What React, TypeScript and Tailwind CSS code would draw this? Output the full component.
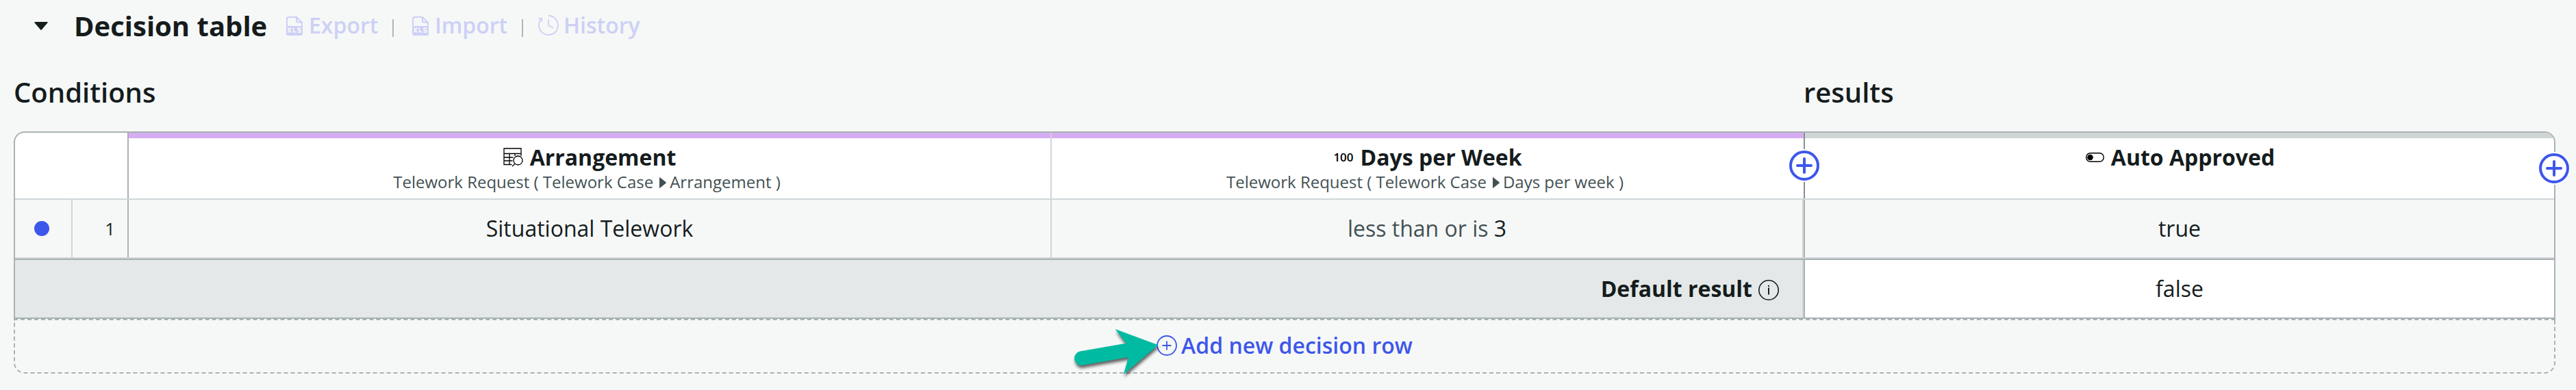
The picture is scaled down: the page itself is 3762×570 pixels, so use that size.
import React from "react";

const ExcelIcon = () => (
  <svg width="24" height="28" viewBox="0 0 24 28" className="block shrink-0" fill="none">
    <path d="M1 15V4a3 3 0 0 1 3-3h11l8 8v6" stroke="currentColor" strokeWidth="2" />
    <path d="M15 1v5.500a2 2 0 0 0 2 2h6" stroke="currentColor" strokeWidth="2" />
    <path d="M0 14h24v11a3 3 0 0 1-3 3H3a3 3 0 0 1-3-3z" fill="currentColor" />
    <path d="M2.500 16.500l4.500 7M7 16.500l-4.500 7M10.500 16.500v6.200h4.200M21.500 17.200h-4.200v2.800h3.600v2.800h-4.200" stroke="#f6f8f7" strokeWidth="1.700" />
  </svg>
);

const HistoryIcon = () => (
  <svg width="30" height="30" viewBox="0 0 30 30" className="mb-[2px] block shrink-0" fill="none" stroke="currentColor" strokeWidth="1.800">
    <path d="M15 1A14 14 0 1 1 4.800 5.400" />
    <path d="M0 4.800h5.200v4.700M15 6.500v8.500l7 4" />
  </svg>
);

const TableSearchIcon = () => (
  <svg width="30" height="28" viewBox="0 0 30 28" className="block shrink-0" fill="none" stroke="#000" strokeWidth="1.300">
    <path d="M12.500 24.500H1V1h25v7.500H1M9 8.500v16M1 14h13.500M1 19h12.500M17 8.500v3.500M26 8.500v3.500" />
    <circle cx="21.500" cy="18.500" r="6.500" />
    <path d="M17 23.200l-4 4" />
  </svg>
);

const ToggleIcon = () => (
  <svg width="27" height="14" viewBox="0 0 27 14" className="block shrink-0" fill="none">
    <rect x=".7" y=".7" width="25.600" height="12.600" rx="6.300" stroke="#000" strokeWidth="1.400" />
    <circle cx="6.500" cy="7" r="4.300" fill="#000" />
  </svg>
);

const PlusCircle = () => (
  <svg width="48" height="48" viewBox="0 0 48 48" className="block" fill="none">
    <circle cx="24" cy="24" r="24" fill="#fff" />
    <circle cx="24" cy="24" r="20" stroke="#3d57eb" strokeWidth="4" />
    <path d="M24 14v20M14 24h20" stroke="#3d57eb" strokeWidth="4" strokeLinecap="round" />
  </svg>
);

const FieldPath = ({ leaf }: { leaf: string }) => (
  <div className="mr-[8px] flex items-center text-[24px] leading-[32px] text-[#435153]">
    <span>Telework Request ( Telework Case</span>
    <svg width="10" height="16" viewBox="0 0 10 16" className="mt-[2px] mr-[5px] ml-[9px]">
      <path d="M0 0.500Q0-.5 1 .4L9.500 7.200Q10.200 8 9.500 8.800L1 15.600Q0 16.500 0 15.500z" fill="#435153" />
    </svg>
    <span>{leaf} )</span>
  </div>
);

export default function App() {
  return (
    <div className="h-[570px] w-[3762px] overflow-hidden bg-[#f6f8f7] pl-[20px] font-['Open_Sans','Noto_Sans',sans-serif] text-[#151c1d]">
      <div className="flex h-[76px] items-center pl-[30px]">
        <svg width="20" height="12" viewBox="0 0 20 12" className="block">
          <path d="M1.500 0h17q2 0 .8 1.500L11 11.200q-1 1-2 0L.7 1.500Q-.5 0 1.500 0z" fill="#151c1d" />
        </svg>
        <h1 className="ml-[38px] w-[282px] text-[40px] leading-[76px] font-bold whitespace-nowrap">Decision table</h1>
        <div className="ml-[28px] flex items-center text-[32px] font-semibold text-[#cdd0f5]">
          <ExcelIcon />
          <span className="ml-[9px] w-[101px] pb-[2px] leading-[74px]">Export</span>
          <i className="mt-[6px] ml-[21px] h-[26px] w-[2px] bg-[#b0b7b8]" />
          <span className="ml-[27px]"><ExcelIcon /></span>
          <span className="ml-[9px] w-[105px] pb-[2px] leading-[74px]">Import</span>
          <i className="mt-[6px] ml-[22px] h-[26px] w-[2px] bg-[#b0b7b8]" />
          <span className="ml-[22px]"><HistoryIcon /></span>
          <span className="ml-[7px] pb-[2px] leading-[74px]">History</span>
        </div>
      </div>
      <div className="flex h-[116px] items-center pt-[2px] text-[40px] leading-[114px] font-semibold">
        <span className="w-[2614px]">Conditions</span>
        <span>results</span>
      </div>
      <div className="relative w-[3712px]">
        <div className="overflow-hidden rounded-t-[16px] border-2 border-[#a9b2b4] bg-white">
          <div className="grid h-[98px] grid-cols-[166px_1346px_1100px_1fr] border-b-2 border-[#d0d6d9]">
            <div className="border-r-2 border-[#a9b2b4]" />
            <div className="flex flex-col items-center border-t-[8px] border-[#d6acf2] pt-[8px]">
              <div className="flex items-center text-[32px] leading-[40px] font-bold">
                <TableSearchIcon />
                <span className="ml-[9px]">Arrangement</span>
              </div>
              <FieldPath leaf="Arrangement" />
            </div>
            <div className="flex border-l-2 border-[#d0d6d9]">
              <div className="flex flex-1 flex-col items-center border-t-[8px] border-[#d6acf2] pt-[8px]">
                <div className="flex items-center text-[32px] leading-[40px] font-bold">
                  <span className="text-[17px] font-semibold text-black">100</span>
                  <span className="ml-[10px]">Days per Week</span>
                </div>
                <FieldPath leaf="Days per week" />
              </div>
            </div>
            <div className="flex border-l-2 border-[#879193]">
              <div className="flex flex-1 flex-col items-center border-t-[8px] border-[#d0d6d6] pt-[8px]">
                <div className="flex items-center pl-[2px] text-[32px] leading-[40px] font-bold">
                  <ToggleIcon />
                  <span className="ml-[10px]">Auto Approved</span>
                </div>
              </div>
            </div>
          </div>
          <div className="grid h-[86px] grid-cols-[84px_82px_1346px_1100px_1fr] border-b-2 border-[#d0d6d9] bg-[#f6f8f7] text-[32px] leading-[84px]">
            <div className="flex items-center justify-center border-r-2 border-[#d0d6d9] pr-[4px]">
              <i className="h-[22px] w-[22px] rounded-full bg-[#3d57eb]" />
            </div>
            <div className="border-r-2 border-[#a9b2b4] pr-[18px] text-right text-[26px]">1</div>
            <div className="text-center">Situational Telework</div>
            <div className="border-x-2 border-[#d0d6d9] text-center">
              <span className="text-[#435153]">less than or is</span> 3
            </div>
            <div className="border-l-2 border-[#a9b2b4] text-center">true</div>
          </div>
          <div className="grid h-[86px] grid-cols-[2612px_1fr] border-t-2 border-[#a9b2b4] text-[32px] leading-[84px]">
            <div className="flex items-center justify-end border-r-2 border-[#d0d6d9] bg-[#e4e8e8] pr-[34px] font-bold">
              Default result
              <svg width="30" height="30" viewBox="0 0 30 30" className="mt-[4px] ml-[9px]" fill="none" stroke="#151c1d">
                <circle cx="15" cy="15" r="14.200" strokeWidth="1.600" />
                <path d="M15 11.500v10M15 8v2" strokeWidth="2" />
              </svg>
            </div>
            <div className="border-l-2 border-[#a9b2b4] text-center">false</div>
          </div>
        </div>
        <div className="flex h-[80px] items-center justify-center rounded-b-[16px] border-2 border-dashed border-[#a9b2b4] pb-[2px] text-[32px] font-semibold text-[#3d57eb]">
          <svg width="30" height="30" viewBox="0 0 30 30" fill="none" stroke="currentColor" strokeWidth="1.800">
            <circle cx="15" cy="15" r="14" />
            <path d="M15 8.500v13M8.500 15h13" />
          </svg>
          <span className="ml-[6px] leading-[40px]">Add new decision row</span>
        </div>
        <div className="absolute top-[26px] left-[2591px]"><PlusCircle /></div>
        <div className="absolute top-[30px] left-[3686px]"><PlusCircle /></div>
        <svg width="140" height="90" viewBox="0 0 140 90" className="absolute top-[281px] left-[1538px] drop-shadow-[1px_4px_2px_rgba(0,0,0,0.6)]" fill="#00bba2">
          <path d="M19 40.500L86.600 28.700 70.600 8 133.400 31.300 83 74 90 49 21.500 61A10.400 10.400 0 0 1 19 40.500z" />
        </svg>
      </div>
    </div>
  );
}
